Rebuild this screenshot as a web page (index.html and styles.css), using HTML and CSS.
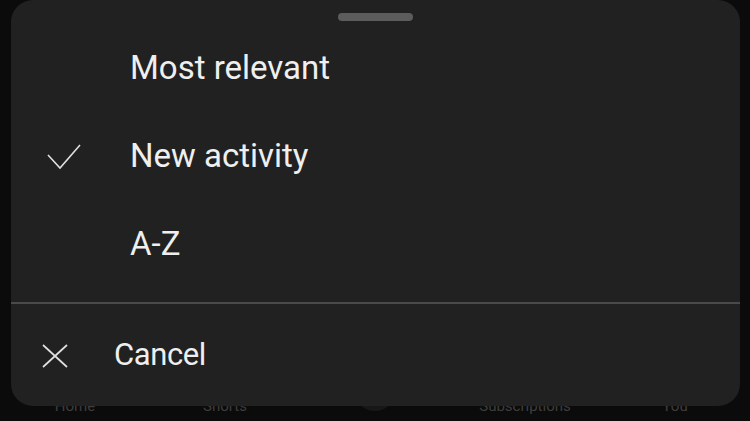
FILE: index.html
```html
<!DOCTYPE html>
<html lang="en">
<head>
    <meta charset="UTF-8">
    <meta name="viewport" content="width=device-width, initial-scale=1.0">
    <title>Sort comments</title>
    <link rel="stylesheet" href="styles.css">
</head>
<body>

    <div class="sheet">
        <div class="handle"></div>

        <!-- Opcoes de ordenacao -->
        <ul class="options">
            <li class="option">
                <span class="option-icon"></span>
                <span class="option-text">Most relevant</span>
            </li>
            <li class="option selected">
                <span class="option-icon">
                    <svg width="34" height="26" viewBox="0 0 34 26">
                        <polyline points="1,11 13,24 33,1" fill="none" stroke="#e0e0e0" stroke-width="1.6"/>
                    </svg>
                </span>
                <span class="option-text">New activity</span>
            </li>
            <li class="option">
                <span class="option-icon"></span>
                <span class="option-text">A-Z</span>
            </li>
        </ul>

        <div class="divider"></div>

        <!-- Cancelar -->
        <div class="cancel">
            <span class="cancel-icon">
                <svg width="26" height="24" viewBox="0 0 26 24">
                    <line x1="1" y1="1" x2="25" y2="23" stroke="#e0e0e0" stroke-width="1.7"/>
                    <line x1="25" y1="1" x2="1" y2="23" stroke="#e0e0e0" stroke-width="1.7"/>
                </svg>
            </span>
            <span class="cancel-text">Cancel</span>
        </div>
    </div>

    <!-- Barra de navegacao atras do painel -->
    <nav class="bottom-nav">
        <span class="nav-item">Home</span>
        <span class="nav-item">Shorts</span>
        <span class="nav-item"><span class="nav-create"></span></span>
        <span class="nav-item">Subscriptions</span>
        <span class="nav-item">You</span>
    </nav>

</body>
</html>
```

FILE: styles.css
```css
body {
    font-family: 'Roboto', 'Liberation Sans', sans-serif;
    background-color: #0b0b0b;
    color: #efefef;
    margin: 0;
    height: 421px;
    overflow: hidden;
}
.sheet {
    position: relative;
    z-index: 1;
    margin: 0 10px 0 11px;
    height: 406px;
    background-color: #212121;
    border-radius: 22px;
    display: flex;
    flex-direction: column;
}
.handle {
    width: 75px;
    height: 8px;
    margin: 13px auto 0;
    background-color: #5c5c5c;
    border-radius: 4px;
}
.options {
    list-style: none;
    margin: 3px 0 0;
    padding: 0;
}
.option {
    display: flex;
    align-items: center;
    height: 88px;
    font-size: 33px;
    line-height: 88px;
}
.option-icon {
    display: flex;
    align-items: center;
    width: 83px;
    padding-left: 36px;
    padding-top: 1px;
}
.divider {
    height: 2px;
    margin-top: 14px;
    background-color: #4a4a4a;
}
.cancel {
    display: flex;
    align-items: center;
    height: 102px;
    font-size: 31px;
    line-height: 102px;
}
.cancel-icon {
    display: flex;
    width: 72px;
    padding-left: 31px;
    padding-top: 1px;
}
.cancel-text {
    letter-spacing: -0.4px;
}
.bottom-nav {
    display: flex;
    margin-top: -10px;
    height: 26px;
    font-size: 15px;
    line-height: 20px;
    color: #3e3e3e;
}
.nav-item {
    flex: 1;
    text-align: center;
}
.nav-create {
    display: inline-block;
    width: 40px;
    height: 40px;
    margin-top: -25px;
    border-radius: 50%;
    background-color: #181818;
}
```
